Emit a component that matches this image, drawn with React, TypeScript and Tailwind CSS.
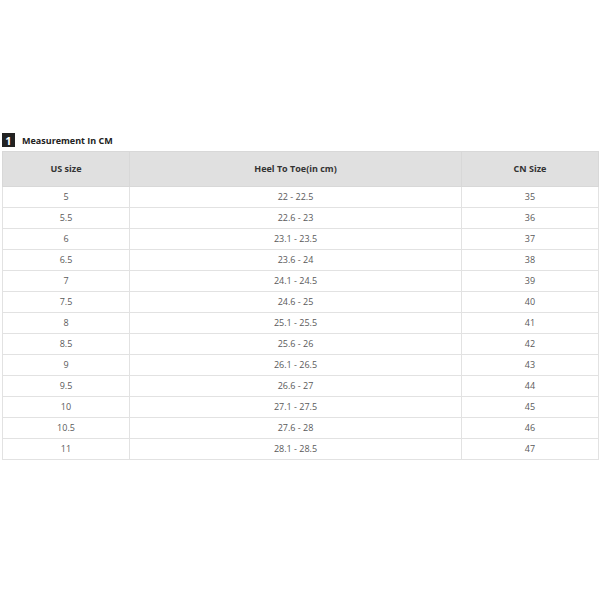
import React from 'react';

const rows: [string, string, string][] = [
  ['5', '22 - 22.5', '35'],
  ['5.5', '22.6 - 23', '36'],
  ['6', '23.1 - 23.5', '37'],
  ['6.5', '23.6 - 24', '38'],
  ['7', '24.1 - 24.5', '39'],
  ['7.5', '24.6 - 25', '40'],
  ['8', '25.1 - 25.5', '41'],
  ['8.5', '25.6 - 26', '42'],
  ['9', '26.1 - 26.5', '43'],
  ['9.5', '26.6 - 27', '44'],
  ['10', '27.1 - 27.5', '45'],
  ['10.5', '27.6 - 28', '46'],
  ['11', '28.1 - 28.5', '47'],
];

export default function App() {
  return (
    <div className="w-[600px] h-[600px] bg-white pt-[133px] px-[2px] font-['Open_Sans',sans-serif]">
      {/* Section title */}
      <div className="flex items-center h-[14px] gap-[7px]">
        <span className="flex items-center justify-center w-[13px] h-[14px] bg-[#222] text-white text-[11px] font-bold leading-none">
          1
        </span>
        <span className="text-[9px] font-bold text-[#222] leading-none">Measurement In CM</span>
      </div>

      <table className="mt-[4px] w-[596px] table-fixed border-collapse text-center text-[9px] text-[#5a5a5a]">
        <colgroup>
          <col className="w-[127px]" />
          <col className="w-[332px]" />
          <col className="w-[137px]" />
        </colgroup>
        <thead>
          <tr className="h-[35px] bg-[#e0e0e0] text-[#333] font-bold">
            <th className="border border-[#d8d8d8]">US size</th>
            <th className="border border-[#d8d8d8]">Heel To Toe(in cm)</th>
            <th className="border border-[#d8d8d8]">CN Size</th>
          </tr>
        </thead>
        <tbody>
          {rows.map(([us, heel, cn]) => (
            <tr key={us} className="h-[21px]">
              <td className="border border-[#e2e2e2] p-0">{us}</td>
              <td className="border border-[#e2e2e2] p-0">{heel}</td>
              <td className="border border-[#e2e2e2] p-0">{cn}</td>
            </tr>
          ))}
        </tbody>
      </table>
    </div>
  );
}
